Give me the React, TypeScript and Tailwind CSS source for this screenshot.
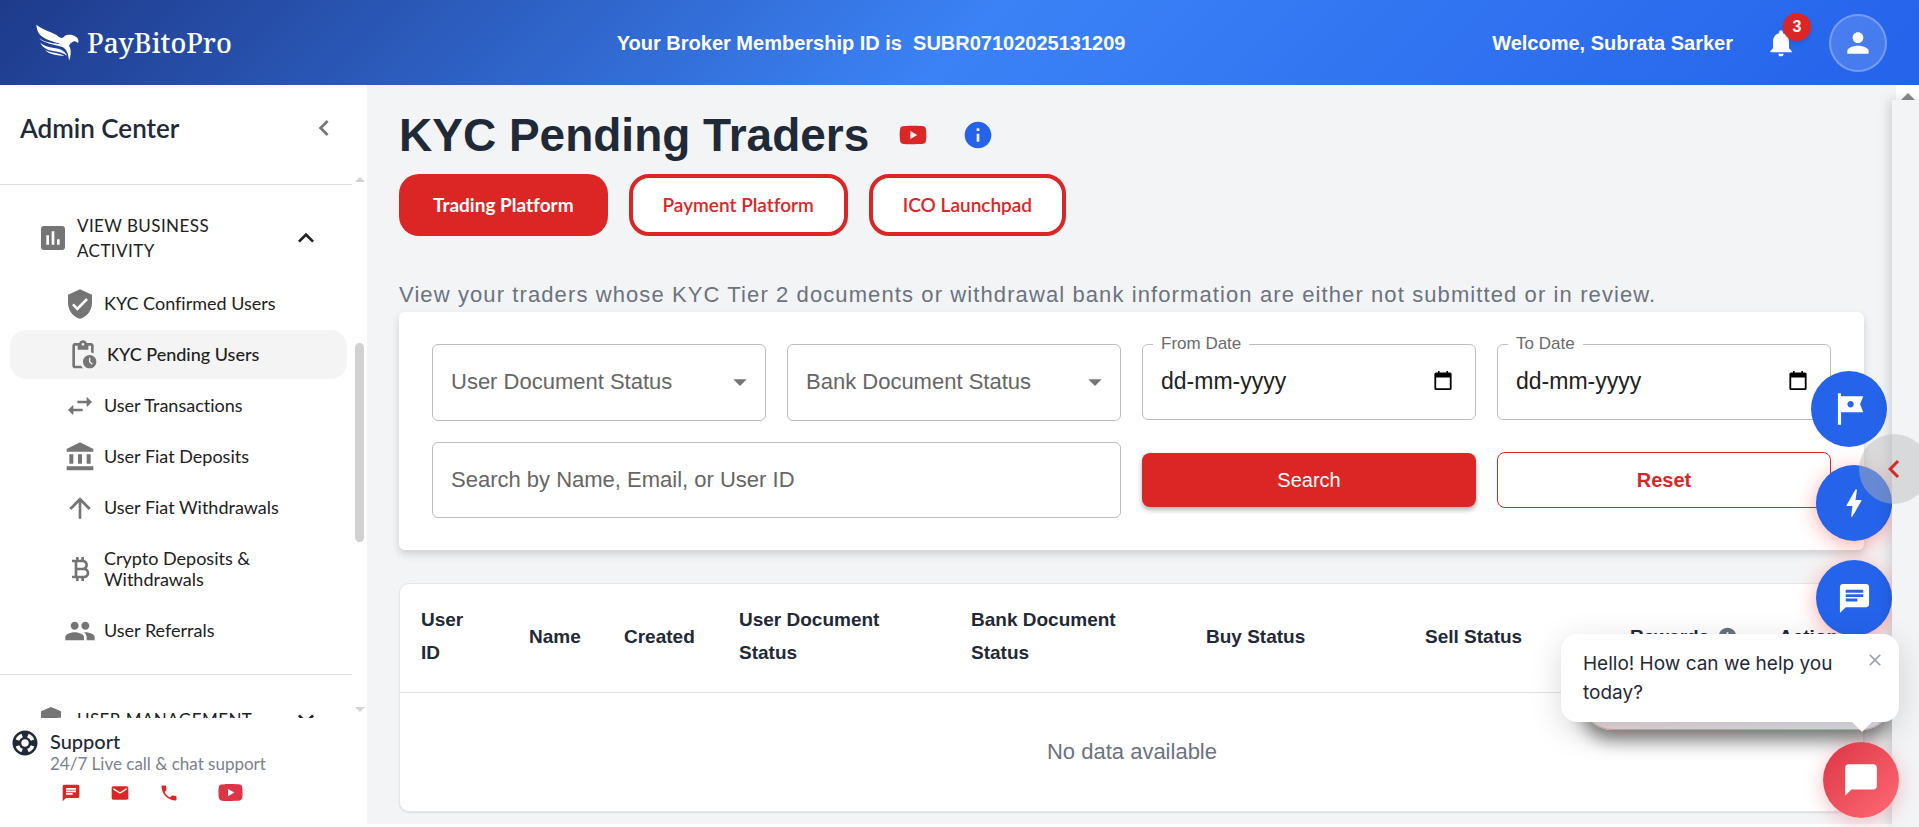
import type { ReactNode } from "react";
import {
  MdAccountBalance,
  MdAdminPanelSettings,
  MdArrowDropDown,
  MdArrowUpward,
  MdAssessment,
  MdBolt,
  MdChat,
  MdChatBubble,
  MdChevronLeft,
  MdClose,
  MdCurrencyBitcoin,
  MdEmail,
  MdExpandLess,
  MdExpandMore,
  MdInfo,
  MdNotifications,
  MdPendingActions,
  MdPeople,
  MdPerson,
  MdPhone,
  MdSupport,
  MdSwapHoriz,
  MdTour,
  MdVerifiedUser,
} from "react-icons/md";

function YouTubeIcon({ size }: { size: number }) {
  return (
    <svg width={size} height={size} viewBox="0 0 24 24" fill="currentColor" aria-hidden="true">
      <path d="M10 15l5.19-3L10 9v6m11.56-7.83c.13.47.22 1.1.28 1.9.07.8.1 1.49.1 2.09L22 12c0 2.19-.16 3.8-.44 4.83-.25.9-.83 1.48-1.73 1.73-.47.13-1.33.22-2.65.28-1.3.07-2.49.1-3.59.1L12 19c-4.19 0-6.8-.16-7.83-.44-.9-.25-1.48-.83-1.73-1.73-.13-.47-.22-1.1-.28-1.9-.07-.8-.1-1.49-.1-2.09L2 12c0-2.19.16-3.8.44-4.83.25-.9.83-1.48 1.73-1.73.47-.13 1.33-.22 2.65-.28 1.3-.07 2.49-.1 3.59-.1L12 5c4.19 0 6.8.16 7.83.44.9.25 1.48.83 1.73 1.73z" />
    </svg>
  );
}

function Triangle({ up, wide }: { up?: boolean; wide?: boolean }) {
  return (
    <svg
      width={wide ? 14 : 10}
      height={wide ? 7 : 5}
      viewBox="0 0 10 5"
      className={wide ? "fill-[#8b8b8b]" : "fill-[#d3d3d3]"}
      aria-hidden="true"
    >
      <path d={up ? "M5 0l5 5H0z" : "M0 0h10L5 5z"} />
    </svg>
  );
}

function Logo() {
  return (
    <a href="#home" className="flex w-[218px] items-center gap-2 pl-1 text-white">
      <svg width="43" height="37" viewBox="18 24 130 112" fill="currentColor" aria-hidden="true">
        <path d="M19 26C20 50 32 64 60 74C85 83 105 86 113 102C116 90 120 84 127 79C134 74 140 76 145 82C149 72 144 65 137 62C129 55 112 55 104 61C98 70 90 66 80 57C60 46 38 42 19 26Z" />
        <path d="M27 67C42 82 75 87 96 93C110 98 116 114 118 135C124 120 125 104 120 93C112 84 80 86 60 80C45 77 36 73 27 67Z" />
        <path d="M31 80C44 96 75 95 92 101C102 105 109 112 112 121C104 111 84 108 66 105C48 102 36 93 31 80Z" />
        <path d="M44 101C55 111 80 109 104 120C85 119 57 118 44 101Z" />
      </svg>
      <span className="font-['Noto_Serif','Liberation_Serif',serif] text-[27px] leading-9 font-medium">PayBitoPro</span>
    </a>
  );
}

function Header() {
  return (
    <header className="flex h-[85px] shrink-0 items-center justify-between bg-[linear-gradient(135deg,#1e3a8a_0%,#3b82f6_50%,#2563eb_100%)] px-8 text-[20px] font-bold text-white">
      <Logo />
      <p>Your Broker Membership ID is&nbsp; SUBR07102025131209</p>
      <div className="flex items-center gap-8">
        <span>Welcome, Subrata Sarker</span>
        <button type="button" aria-label="Notifications" className="relative">
          <MdNotifications size={32} />
          <span className="absolute -top-3.5 left-[18px] flex size-7 items-center justify-center rounded-full bg-[#dc2626] text-base shadow-md">
            3
          </span>
        </button>
        <button
          type="button"
          aria-label="Profile"
          className="flex size-[58px] items-center justify-center rounded-full border-2 border-white/25 bg-white/15"
        >
          <MdPerson size={32} />
        </button>
      </div>
    </header>
  );
}

const menu: { label: string; icon: ReactNode; active?: boolean; tall?: boolean }[] = [
  { label: "KYC Confirmed Users", icon: <MdVerifiedUser size={32} /> },
  { label: "KYC Pending Users", icon: <MdPendingActions size={32} />, active: true },
  { label: "User Transactions", icon: <MdSwapHoriz size={32} /> },
  { label: "User Fiat Deposits", icon: <MdAccountBalance size={32} /> },
  { label: "User Fiat Withdrawals", icon: <MdArrowUpward size={32} /> },
  { label: "Crypto Deposits & Withdrawals", icon: <MdCurrencyBitcoin size={32} />, tall: true },
  { label: "User Referrals", icon: <MdPeople size={32} /> },
];

function Category({ label, icon, open }: { label: string; icon: ReactNode; open?: boolean }) {
  return (
    <button
      type="button"
      className="flex w-full items-center gap-2 border-t border-[#dedede] pt-7 pr-[30px] pb-[15px] pl-[37px] text-left"
    >
      <span className="text-[#757575]">{icon}</span>
      <span className="flex-1 pr-6 text-[17px] leading-[25px] tracking-wide">{label}</span>
      {open ? <MdExpandLess size={32} /> : <MdExpandMore size={32} />}
    </button>
  );
}

function Sidebar() {
  return (
    <aside className="flex w-[367px] shrink-0 flex-col bg-white font-['Lato','Liberation_Sans',sans-serif] text-[#212121] [font-variant-ligatures:none]">
      <div className="flex h-[86px] shrink-0 items-center justify-between pr-[27px] pl-5">
        <h2 className="text-[26px] font-semibold text-[#1f2937]">Admin Center</h2>
        <button type="button" aria-label="Collapse menu" className="text-[#757575]">
          <MdChevronLeft size={32} />
        </button>
      </div>
      <div className="flex min-h-0 flex-1">
        <nav className="flex min-w-0 flex-1 flex-col overflow-hidden pt-[13px]">
          <Category open label="VIEW BUSINESS ACTIVITY" icon={<MdAssessment size={32} />} />
          <ul className="mb-[18px]">
            {menu.map((m) => (
              <li key={m.label} className="py-px pr-[5px] pl-2.5">
                <a
                  href="#menu"
                  className={
                    m.active
                      ? "flex h-[49px] items-center gap-2 rounded-2xl bg-[#f4f4f4] pl-[57px] text-[18px] font-medium"
                      : m.tall
                        ? "flex h-[70px] items-center gap-2 pr-16 pl-[54px] text-[18px] leading-[21px]"
                        : "flex h-[49px] items-center gap-2 pl-[54px] text-[18px]"
                  }
                >
                  <span className="text-[#757575]">{m.icon}</span>
                  <span>{m.label}</span>
                </a>
              </li>
            ))}
          </ul>
          <Category label="USER MANAGEMENT" icon={<MdAdminPanelSettings size={32} />} />
        </nav>
        <div className="flex w-[15px] flex-col items-center justify-between py-1.5" aria-hidden="true">
          <Triangle up />
          <div className="mt-[125px] mb-auto pt-9">
            <div className="h-[199px] w-[9px] rounded-full bg-[#d1d1d1]" />
          </div>
          <Triangle />
        </div>
      </div>
      <div className="h-[106px] shrink-0 pt-2 pl-2.5">
        <div className="flex gap-2.5">
          <MdSupport size={30} className="mt-0.5 text-[#1f2937]" />
          <div>
            <h3 className="text-[20px] leading-[30px] font-medium text-[#1f2937]">Support</h3>
            <p className="text-[17px] leading-4 text-[#7b818d]">24/7 Live call &amp; chat support</p>
          </div>
        </div>
        <div className="mt-1.5 flex items-center pl-[51px] text-[#dc2626]">
          <a href="#chat" aria-label="Chat" className="mr-[29px]">
            <MdChat size={20} />
          </a>
          <a href="#email" aria-label="Email" className="mr-[29px]">
            <MdEmail size={20} />
          </a>
          <a href="#phone" aria-label="Phone" className="mr-[37px]">
            <MdPhone size={20} />
          </a>
          <a href="#youtube" aria-label="YouTube" className="text-[#dc3545]">
            <YouTubeIcon size={29} />
          </a>
        </div>
      </div>
    </aside>
  );
}

function SelectField({ label }: { label: string }) {
  return (
    <div className="relative">
      <select
        aria-label={label}
        className="h-[77px] w-full appearance-none rounded-md border border-[#bdbdbd] bg-white pr-12 pb-0.5 pl-[18px] text-[22px] text-[#666666]"
      >
        <option>{label}</option>
      </select>
      <MdArrowDropDown size={32} className="pointer-events-none absolute top-[22px] right-2.5 text-[#757575]" />
    </div>
  );
}

function DateField({ id, label }: { id: string; label: string }) {
  return (
    <div className="relative flex h-[76px] items-center rounded-md border border-[#bdbdbd] pr-[22px] pb-0.5 pl-[18px]">
      <label htmlFor={id} className="absolute -top-[13px] left-2.5 bg-white px-2 text-[17px] leading-6 text-[#6b6b6b]">
        {label}
      </label>
      <input
        id={id}
        type="text"
        placeholder="dd-mm-yyyy"
        className="min-w-0 flex-1 text-[23px] outline-none placeholder:text-[#212121]"
      />
      <button type="button" aria-label={"Pick " + label}>
        <svg width="20" height="20" viewBox="0 0 20 20" aria-hidden="true">
          <path
            fillRule="evenodd"
            d="M5 0h1.6v1.5h6.8V0H15v1.5h2a1.6 1.6 0 0 1 1.6 1.6v14.3A1.6 1.6 0 0 1 17 19H3a1.6 1.6 0 0 1-1.6-1.6V3.100A1.6 1.6 0 0 1 3 1.500h2zM3.200 6.500v10.700h13.600V6.500z"
          />
        </svg>
      </button>
    </div>
  );
}

function Filters() {
  return (
    <form
      className="grid grid-cols-4 gap-[21px] rounded-md bg-white px-[33px] py-8 shadow-[0_4px_8px_rgba(0,0,0,0.15)]"
      onSubmit={(e) => e.preventDefault()}
    >
      <SelectField label="User Document Status" />
      <SelectField label="Bank Document Status" />
      <DateField id="from-date" label="From Date" />
      <DateField id="to-date" label="To Date" />
      <input
        type="text"
        aria-label="Search by Name, Email, or User ID"
        placeholder="Search by Name, Email, or User ID"
        className="col-span-2 h-[76px] rounded-md border border-[#bdbdbd] px-[18px] text-[22px] placeholder:text-[#666666]"
      />
      <button
        type="submit"
        className="h-[54px] self-center rounded-lg bg-[#dc2626] text-[20px] text-white shadow-[0_3px_5px_rgba(0,0,0,0.3)]"
      >
        Search
      </button>
      <button
        type="button"
        className="h-14 self-center rounded-lg border border-[#dc2626] text-[20px] font-bold text-[#dc2626]"
      >
        Reset
      </button>
    </form>
  );
}

function TradersTable() {
  return (
    <div className="mt-[33px] overflow-hidden rounded-[10px] border border-[#e5e7eb] bg-white shadow-[0_1px_2px_rgba(0,0,0,0.1)]">
      <table className="w-full table-fixed">
        <colgroup>
          <col className="w-[108px]" />
          <col className="w-[95px]" />
          <col className="w-[115px]" />
          <col className="w-[232px]" />
          <col className="w-[235px]" />
          <col className="w-[219px]" />
          <col className="w-[205px]" />
          <col className="w-[149px]" />
          <col className="w-[106px]" />
        </colgroup>
        <thead>
          <tr className="border-b border-[#dfe1e4] text-left text-[19px] leading-[33px] text-[#1f2937] [&>th]:pt-[19px] [&>th]:pb-[23px] [&>th]:pl-[21px]">
            <th>
              User
              <br />
              ID
            </th>
            <th>Name</th>
            <th>Created</th>
            <th>
              User Document
              <br />
              Status
            </th>
            <th>
              Bank Document
              <br />
              Status
            </th>
            <th>Buy Status</th>
            <th>Sell Status</th>
            <th>
              <span className="flex items-center gap-2">
                Rewards <MdInfo size={21} className="text-[#6b7280]" />
              </span>
            </th>
            <th>Action</th>
          </tr>
        </thead>
        <tbody>
          <tr>
            <td colSpan={9} className="h-[118px] text-center text-[22px] text-[#6b7280]">
              No data available
            </td>
          </tr>
        </tbody>
      </table>
    </div>
  );
}

function Main() {
  return (
    <main className="min-w-0 flex-1 overflow-hidden bg-[#f3f4f6] pt-[15px] pr-[55px] pl-8">
      <div className="flex h-[70px] items-center">
        <h1 className="text-[46px] font-bold text-[#1f2937]">KYC Pending Traders</h1>
        <a href="#video" aria-label="Video guide" className="ml-7 text-[#dc2626]">
          <YouTubeIcon size={32} />
        </a>
        <button type="button" aria-label="Information" className="ml-[33px] text-[#2563eb]">
          <MdInfo size={32} />
        </button>
      </div>
      <div className="mt-1 flex gap-[21px] font-['Lato','Liberation_Sans',sans-serif] text-[19px] font-semibold text-[#dc2626] [font-variant-ligatures:none]">
        <button type="button" className="h-[62px] rounded-[20px] bg-[#dc2626] px-[34px] font-bold text-white">
          Trading Platform
        </button>
        <button type="button" className="h-[62px] rounded-[20px] border-4 border-[#dc2626] bg-white px-[30px]">
          Payment Platform
        </button>
        <button type="button" className="h-[62px] rounded-[20px] border-4 border-[#dc2626] bg-white px-[30px]">
          ICO Launchpad
        </button>
      </div>
      <p className="mt-[43px] mb-0.5 text-[22px] leading-[31px] tracking-wider text-[#6b7280]">
        View your traders whose KYC Tier 2 documents or withdrawal bank information are either not submitted or in
        review.
      </p>
      <Filters />
      <TradersTable />
    </main>
  );
}

function FloatingTools() {
  return (
    <>
      <button
        type="button"
        aria-label="Take a tour"
        className="absolute top-[371px] right-8 flex size-[76px] items-center justify-center rounded-full bg-[#2563eb] text-white"
      >
        <MdTour size={38} />
      </button>
      <button
        type="button"
        aria-label="Quick actions"
        className="absolute top-[465px] right-[27px] flex size-[76px] items-center justify-center rounded-full bg-[#2563eb] text-white shadow-[0_4px_20px_rgba(255,70,70,0.45)]"
      >
        <MdBolt size={36} />
      </button>
      <button
        type="button"
        aria-label="Messages"
        className="absolute top-[560px] right-[27px] flex size-[76px] items-center justify-center rounded-full bg-[#2563eb] text-white shadow-[0_4px_20px_rgba(255,70,70,0.45)]"
      >
        <MdChat size={35} />
      </button>
      <div
        className="absolute top-[650px] right-[27px] h-20 w-[310px] rounded-[30px] border border-[#e3a3a6] bg-[linear-gradient(90deg,#e8d9dc,#dfe1ee)] shadow-[0_10px_18px_rgba(0,0,0,0.5)]"
        aria-hidden="true"
      />
      <div
        className="absolute top-[100px] right-0 bottom-0 w-[27px] bg-[#f3f4f6] shadow-[-3px_0_12px_rgba(0,0,0,0.15)]"
        aria-hidden="true"
      />
      <button
        type="button"
        aria-label="Open panel"
        className="absolute top-[434px] -right-2.5 flex size-[70px] items-center justify-center rounded-full bg-[#b8b8b8]/45 text-[#dc2626]"
      >
        <MdChevronLeft size={36} />
      </button>
      <div
        role="status"
        className="absolute top-[634px] right-5 w-[338px] rounded-2xl bg-white py-[15px] pr-14 pl-[22px] font-['Inter','Liberation_Sans',sans-serif] text-[19px] leading-[29px] text-[#1f2937] shadow-[0_8px_32px_rgba(0,0,0,0.15)]"
      >
        <p>Hello! How can we help you today?</p>
        <button type="button" aria-label="Dismiss" className="absolute top-4 right-[14px] text-[#9ca3af]">
          <MdClose size={20} />
        </button>
        <svg width="20" height="10" viewBox="0 0 20 10" className="absolute top-full right-[27px] fill-white" aria-hidden="true">
          <path d="M0 0h20L10 10z" />
        </svg>
      </div>
      <button
        type="button"
        aria-label="Open chat"
        className="absolute top-[742px] right-5 flex size-[76px] items-center justify-center rounded-full bg-[linear-gradient(135deg,#dc3545,#ff6b74)] text-white shadow-[0_4px_20px_rgba(220,53,69,0.3)]"
      >
        <MdChatBubble size={38} />
      </button>
    </>
  );
}

export default function App() {
  return (
    <div className="relative flex h-screen min-w-[1400px] flex-col overflow-hidden bg-white pb-[3px] font-['Liberation_Sans',Arial,sans-serif]">
      <Header />
      <div className="flex min-h-0 flex-1">
        <Sidebar />
        <Main />
        <div className="-ml-[23px] flex w-[23px] flex-col items-center bg-white pt-2" aria-hidden="true">
          <Triangle up wide />
        </div>
      </div>
      <FloatingTools />
    </div>
  );
}
